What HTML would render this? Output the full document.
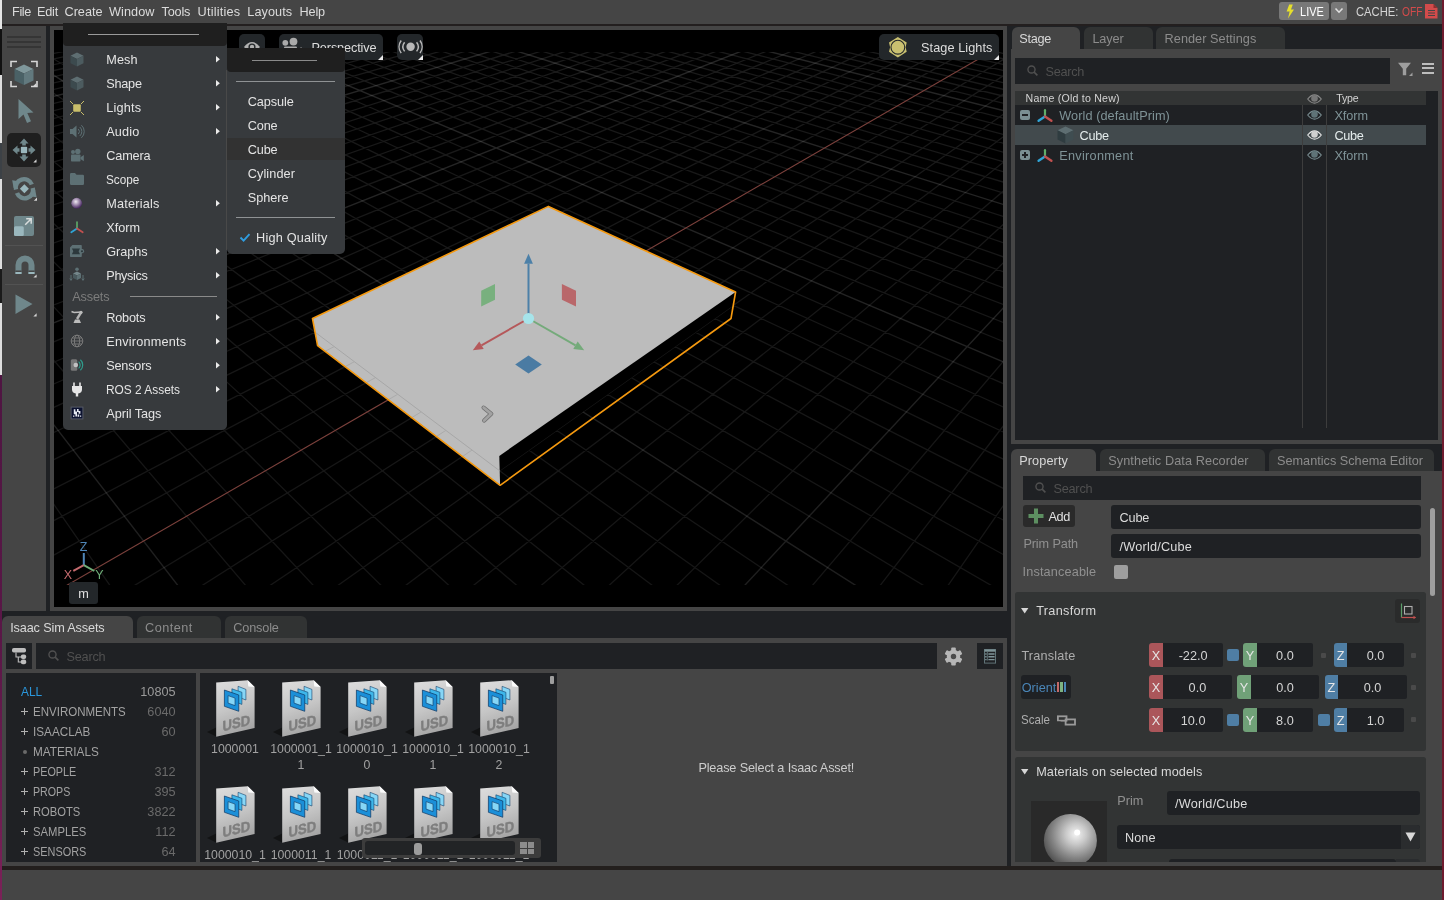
<!DOCTYPE html><html lang="en"><head><meta charset="utf-8"><title>Isaac Sim</title><style>html,body{margin:0;padding:0}body{width:1444px;height:900px;overflow:hidden;position:relative;background:#454545;font-family:"Liberation Sans", sans-serif;font-size:12.7px;color:#ccc}body{will-change:transform}div,span,svg{position:absolute;box-sizing:border-box}svg{overflow:visible}</style></head><body><div style="left:0px;top:0px;width:2px;height:900px;background:linear-gradient(#e6e6e6 0px,#e6e6e6 29px,#111 29px,#111 75px,#dedede 75px,#dedede 143px,#3c4146 143px,#3c4146 179px,#dedede 179px,#dedede 269px,#1a1a1a 269px,#1a1a1a 303px,#dedede 303px,#dedede 375px,#4f1542 375px,#5a1747 640px,#7b2158 900px);"></div><div style="left:1442px;top:0px;width:2px;height:900px;background:#6e1b2e;"></div><div style="left:2px;top:0px;width:1440px;height:24px;background:#454545;"></div><div style="left:2px;top:24px;width:1440px;height:2px;background:#231f1f;"></div><span style="top:3.60px;font-size:12.7px;line-height:16px;color:#dcdcdc;white-space:pre;letter-spacing:-0.363px;left:12px;">File</span><span style="top:3.60px;font-size:12.7px;line-height:16px;color:#dcdcdc;white-space:pre;letter-spacing:-0.219px;left:37px;">Edit</span><span style="top:3.60px;font-size:12.7px;line-height:16px;color:#dcdcdc;white-space:pre;letter-spacing:-0.016px;left:64.5px;">Create</span><span style="top:3.60px;font-size:12.7px;line-height:16px;color:#dcdcdc;white-space:pre;letter-spacing:0.062px;left:109px;">Window</span><span style="top:3.60px;font-size:12.7px;line-height:16px;color:#dcdcdc;white-space:pre;letter-spacing:-0.165px;left:161.5px;">Tools</span><span style="top:3.60px;font-size:12.7px;line-height:16px;color:#dcdcdc;white-space:pre;letter-spacing:0.223px;left:197.5px;">Utilities</span><span style="top:3.60px;font-size:12.7px;line-height:16px;color:#dcdcdc;white-space:pre;letter-spacing:0.066px;left:247.3px;">Layouts</span><span style="top:3.60px;font-size:12.7px;line-height:16px;color:#dcdcdc;white-space:pre;letter-spacing:-0.148px;left:299.5px;">Help</span><div style="left:1279px;top:2px;width:50px;height:18px;background:#787878;border-radius:3px;"></div><svg style="left:1285px;top:4px;" width="10" height="15" viewBox="0 0 10 15"><path d="M4.2 0.5L7.8 0.5L6 5.4L9 5.4L3 14.5L4.6 7.6L1.6 7.6Z" fill="#e6df2c"/></svg><span style="top:3.60px;font-size:12.7px;line-height:16px;color:#ffffff;white-space:pre;transform:scaleX(0.8686);transform-origin:0 50%;left:1299.5px;">LIVE</span><div style="left:1331px;top:2px;width:16px;height:18px;background:#787878;border-radius:3px;"></div><svg style="left:1334px;top:7px;" width="10" height="8" viewBox="0 0 10 8"><path d="M1.5 1.5L5 5.2L8.5 1.5" fill="none" stroke="#e0e0e0" stroke-width="1.6"/></svg><span style="top:3.60px;font-size:12.7px;line-height:16px;color:#d4d4d4;white-space:pre;transform:scaleX(0.8845);transform-origin:0 50%;left:1355.6px;">CACHE:</span><span style="top:3.60px;font-size:12.7px;line-height:16px;color:#d24b4b;white-space:pre;transform:scaleX(0.8079);transform-origin:0 50%;left:1401.5px;">OFF</span><svg style="left:1425px;top:4px;" width="13" height="15" viewBox="0 0 13 15"><path d="M0 0H8.5L12.5 4V14.5H0Z" fill="#d24b4b"/><path d="M8.5 0V4H12.5Z" fill="#8a2f2f"/><path d="M3 6.5H10M3 9H10M3 11.5H10" stroke="#454545" stroke-width="1.2"/></svg><div style="left:2px;top:26px;width:44px;height:585px;background:#454545;"></div><div style="left:7px;top:35.5px;width:34px;height:2.6px;background:#353535;"></div><div style="left:7px;top:40.5px;width:34px;height:2.6px;background:#353535;"></div><div style="left:7px;top:45.5px;width:34px;height:2.6px;background:#353535;"></div><svg style="left:8px;top:58px;" width="32" height="32" viewBox="0 0 32 32"><path d="M3 9V3.5H9M23 3.5H29V9M3 23V28.5H9M23 28.5H29V23" fill="none" stroke="#d6d6d6" stroke-width="1.6"/><path d="M16 6.5L25.5 11L16 15.5L6.5 11Z" fill="#7f979b"/><path d="M6.5 11L16 15.5V27L6.5 22.5Z" fill="#4a6166"/><path d="M25.5 11V22.5L16 27V15.5Z" fill="#62797e"/><path d="M28.3 25V28.3H25Z" fill="#d6d6d6"/></svg><svg style="left:16px;top:98px;" width="20" height="28" viewBox="0 0 20 28"><path d="M2.5 1L2.5 21L7.5 16.5L11 25L15 23.2L11.3 15L17.5 14.5Z" fill="#6f878b"/></svg><div style="left:7px;top:133px;width:34px;height:34px;background:#1f1f1f;border-radius:5px;"></div><svg style="left:9px;top:135px;" width="30" height="30" viewBox="0 0 30 30"><path d="M15 3.5L19.5 8.5H10.5Z M15 26.5L10.5 21.5H19.5Z M3.5 15L8.5 10.5V19.5Z M26.5 15L21.5 19.5V10.5Z" fill="#6f878b"/><path d="M13.2 8H16.8V10.5H13.2Z M13.2 19.5H16.8V22H13.2Z M8 13.2H10.5V16.8H8Z M19.5 13.2H22V16.8H19.5Z" fill="#6f878b"/><rect x="11.8" y="11.8" width="6.4" height="6.4" rx="1" fill="#9ab7bd"/><path d="M27.5 24.3V27.5H24.3Z" fill="#d6d6d6"/></svg><svg style="left:11px;top:175px;" width="28" height="28" viewBox="0 0 28 28"><path d="M5 14.5A8.3 8.3 0 0 1 20.8 9.5" fill="none" stroke="#6f878b" stroke-width="4.4"/><path d="M1.2 5.2L9.6 6.4L2.6 13Z" fill="#6f878b"/><path d="M21.8 13A8.3 8.3 0 0 1 6 18" fill="none" stroke="#6f878b" stroke-width="4.4"/><path d="M25.6 22.3L17.2 21.1L24.2 14.5Z" fill="#6f878b"/><path d="M13.4 9.3L17.9 13.8L13.4 18.3L8.9 13.8Z" fill="#9ab7bd"/><path d="M26 22.5V25.7H22.8Z" fill="#d6d6d6"/></svg><svg style="left:13px;top:215px;" width="22" height="22" viewBox="0 0 22 22"><rect x="1" y="1" width="20" height="20" rx="2" fill="#6f878b"/><rect x="1" y="11.2" width="9.8" height="9.8" rx="1.5" fill="#9ab7bd"/><path d="M12.2 9.8L18 4M13.2 3.8H18.2V8.8" fill="none" stroke="#d8dcdc" stroke-width="1.5"/></svg><div style="left:5px;top:245px;width:38px;height:1px;background:#525252;"></div><svg style="left:12px;top:253px;" width="26" height="26" viewBox="0 0 26 26"><path d="M3.5 21V12A9.5 9.5 0 0 1 22.5 12V21H16.5V12A3.5 3.5 0 0 0 9.5 12V21Z" fill="#6f878b"/><path d="M3.5 17.5H9.5V19H3.5Z M16.5 17.5H22.5V19H16.5Z" fill="#454545"/><path d="M3.5 19H9.5V21H3.5Z M16.5 19H22.5V21H16.5Z" fill="#9ab7bd"/><path d="M24.6 21.4V24.6H21.4Z" fill="#d6d6d6"/></svg><div style="left:5px;top:284px;width:38px;height:1px;background:#525252;"></div><svg style="left:14px;top:293px;" width="24" height="26" viewBox="0 0 24 26"><path d="M1.5 1.5L18.5 11L1.5 21Z" fill="#6f878b"/><path d="M22.6 20.3V23.5H19.4Z" fill="#d6d6d6"/></svg><div style="left:46px;top:26px;width:4px;height:585px;background:#1f2124;"></div><div style="left:50px;top:26px;width:957px;height:585px;background:#454545;"></div><div style="left:54px;top:30px;width:949px;height:577px;background:#000;"></div><div style="left:1007px;top:26px;width:4px;height:840px;background:#1f2124;"></div><svg style="left:54px;top:30px;" width="949" height="577" viewBox="0 0 949 577"><defs><clipPath id="rc"><rect x="0" y="22" width="949" height="533"/></clipPath><linearGradient id="gf" gradientUnits="userSpaceOnUse" x1="0" y1="22" x2="0" y2="555"><stop offset="0" stop-color="#fff" stop-opacity=".105"/><stop offset=".25" stop-color="#fff" stop-opacity=".095"/><stop offset="1" stop-color="#fff" stop-opacity=".085"/></linearGradient><linearGradient id="gm" gradientUnits="userSpaceOnUse" x1="0" y1="22" x2="0" y2="555"><stop offset="0" stop-color="#fff" stop-opacity=".15"/><stop offset="1" stop-color="#fff" stop-opacity=".12"/></linearGradient></defs><g clip-path="url(#rc)"><path d="M475.0 -94.6L1371.4 81.5M467.0 -93.0L1369.8 87.1M459.0 -91.4L1368.1 92.9M450.7 -89.8L1366.3 98.9M433.9 -86.5L1362.7 111.5M425.3 -84.8L1360.7 118.0M416.5 -83.1L1358.8 124.8M407.6 -81.3L1356.7 131.9M398.5 -79.5L1354.6 139.1M389.3 -77.7L1352.4 146.7M379.9 -75.9L1350.1 154.5M370.4 -74.0L1347.8 162.5M360.6 -72.1L1345.3 170.9M340.7 -68.2L1340.1 188.6M330.5 -66.2L1337.4 198.0M320.0 -64.1L1334.6 207.7M309.4 -62.0L1331.6 217.8M298.6 -59.9L1328.5 228.4M287.6 -57.8L1325.3 239.4M276.4 -55.6L1321.9 250.9M264.9 -53.3L1318.4 262.9M253.3 -51.0L1314.8 275.4M229.3 -46.3L1307.0 302.2M216.9 -43.9L1302.8 316.6M204.3 -41.4L1298.3 331.7M191.5 -38.9L1293.7 347.6M178.4 -36.3L1288.8 364.3M165.0 -33.7L1283.7 381.9M151.3 -31.0L1278.3 400.4M137.4 -28.3L1272.5 420.1M123.1 -25.5L1266.5 440.8M93.7 -19.7L1253.2 486.2M78.5 -16.7L1246.0 511.1M63.0 -13.7L1238.2 537.6M47.1 -10.5L1230.0 565.9M30.9 -7.3L1221.1 596.2M14.3 -4.1L1211.6 628.7M-2.7 -0.8L1201.4 663.7M-20.1 2.7L1190.3 701.5M-37.9 6.2L1178.4 742.4M-74.8 13.4L1151.3 835.2M-93.9 17.2L1135.9 888.1M-113.5 21.0L1118.9 946.2M-133.6 25.0L1100.1 1010.4M-154.2 29.0L1079.4 1081.5M-175.4 33.2L1056.2 1160.9M-197.1 37.4L1030.1 1250.0M-219.4 41.8L1000.7 1350.8M-242.2 46.3L967.2 1465.7M-289.9 55.7L883.7 1751.5M-314.7 60.5L830.9 1932.3M-340.3 65.5L767.8 2148.2M-366.5 70.7L691.2 2410.6M-393.6 76.0L596.1 2736.1M-421.4 81.5L475.0 3150.9M475.0 -94.6L-450.1 87.1M483.0 -93.0L-448.9 92.9M499.3 -89.8L-446.3 105.1M507.6 -88.2L-444.9 111.5M516.1 -86.5L-443.6 118.0M524.7 -84.8L-442.1 124.8M533.5 -83.1L-440.6 131.9M542.4 -81.3L-439.1 139.1M551.5 -79.5L-437.5 146.7M560.7 -77.7L-435.8 154.5M570.1 -75.9L-434.1 162.5M589.4 -72.1L-430.5 179.6M599.2 -70.2L-428.6 188.6M609.3 -68.2L-426.6 198.0M619.5 -66.2L-424.5 207.7M630.0 -64.1L-422.4 217.8M640.6 -62.0L-420.1 228.4M651.4 -59.9L-417.8 239.4M662.4 -57.8L-415.4 250.9M673.6 -55.6L-412.8 262.9M696.7 -51.0L-407.4 288.5M708.6 -48.7L-404.5 302.2M720.7 -46.3L-401.4 316.6M733.1 -43.9L-398.2 331.7M745.7 -41.4L-394.9 347.6M758.5 -38.9L-391.3 364.3M771.6 -36.3L-387.6 381.9M785.0 -33.7L-383.7 400.4M798.7 -31.0L-379.5 420.1M826.9 -25.5L-370.4 462.8M841.4 -22.6L-365.5 486.2M856.3 -19.7L-360.2 511.1M871.5 -16.7L-354.6 537.6M887.0 -13.7L-348.6 565.9M902.9 -10.5L-342.2 596.2M919.1 -7.3L-335.3 628.7M935.7 -4.1L-327.8 663.7M952.7 -0.8L-319.8 701.5M987.9 6.2L-301.7 786.8M1006.1 9.7L-291.5 835.2M1024.8 13.4L-280.3 888.1M1043.9 17.2L-267.9 946.2M1063.5 21.0L-254.3 1010.4M1083.6 25.0L-239.2 1081.5M1104.2 29.0L-222.4 1160.9M1125.4 33.2L-203.5 1250.0M1147.1 37.4L-182.1 1350.8M1192.2 46.3L-129.8 1597.8M1215.7 50.9L-97.2 1751.5M1239.9 55.7L-58.8 1932.3M1264.7 60.5L-13.0 2148.2M1290.3 65.5L42.6 2410.6M1316.5 70.7L111.6 2736.1M1343.6 76.0L199.6 3150.9M1371.4 81.5L315.4 3697.3" stroke="url(#gf)" stroke-width="1.25" fill="none"/><path d="M442.4 -88.2L1364.5 105.1M350.8 -70.2L1342.8 179.6M241.4 -48.7L1311.0 288.5M108.6 -22.6L1260.0 462.8M-56.1 9.7L1165.4 786.8M-265.7 50.9L928.6 1597.8M491.0 -91.4L-447.6 98.9M579.6 -74.0L-432.3 170.9M685.1 -53.3L-410.2 275.4M812.6 -28.3L-375.1 440.8M1169.4 41.8L-157.8 1465.7" stroke="url(#gm)" stroke-width="1.4" fill="none"/><path d="M970.1 2.7L-311.2 742.4" stroke="#7c413c" stroke-width="1.1" fill="none"/><polygon points="494.4,176.4 681.6,262.0 677.0,288.5 446.1,455.3 263.6,315.6 258.5,288.5" fill="#bcbcbc"/><polygon points="445.3,425.9 681.6,262.0 677.0,288.5 446.1,455.3" fill="#000"/><clipPath id="bf"><polygon points="445.7,440.8 679.3,275.4 677.0,288.5 446.1,455.3"/></clipPath><g clip-path="url(#bf)"><path d="M475.0 -94.6L1371.4 81.5M467.0 -93.0L1369.8 87.1M459.0 -91.4L1368.1 92.9M450.7 -89.8L1366.3 98.9M433.9 -86.5L1362.7 111.5M425.3 -84.8L1360.7 118.0M416.5 -83.1L1358.8 124.8M407.6 -81.3L1356.7 131.9M398.5 -79.5L1354.6 139.1M389.3 -77.7L1352.4 146.7M379.9 -75.9L1350.1 154.5M370.4 -74.0L1347.8 162.5M360.6 -72.1L1345.3 170.9M340.7 -68.2L1340.1 188.6M330.5 -66.2L1337.4 198.0M320.0 -64.1L1334.6 207.7M309.4 -62.0L1331.6 217.8M298.6 -59.9L1328.5 228.4M287.6 -57.8L1325.3 239.4M276.4 -55.6L1321.9 250.9M264.9 -53.3L1318.4 262.9M253.3 -51.0L1314.8 275.4M229.3 -46.3L1307.0 302.2M216.9 -43.9L1302.8 316.6M204.3 -41.4L1298.3 331.7M191.5 -38.9L1293.7 347.6M178.4 -36.3L1288.8 364.3M165.0 -33.7L1283.7 381.9M151.3 -31.0L1278.3 400.4M137.4 -28.3L1272.5 420.1M123.1 -25.5L1266.5 440.8M93.7 -19.7L1253.2 486.2M78.5 -16.7L1246.0 511.1M63.0 -13.7L1238.2 537.6M47.1 -10.5L1230.0 565.9M30.9 -7.3L1221.1 596.2M14.3 -4.1L1211.6 628.7M-2.7 -0.8L1201.4 663.7M-20.1 2.7L1190.3 701.5M-37.9 6.2L1178.4 742.4M-74.8 13.4L1151.3 835.2M-93.9 17.2L1135.9 888.1M-113.5 21.0L1118.9 946.2M-133.6 25.0L1100.1 1010.4M-154.2 29.0L1079.4 1081.5M-175.4 33.2L1056.2 1160.9M-197.1 37.4L1030.1 1250.0M-219.4 41.8L1000.7 1350.8M-242.2 46.3L967.2 1465.7M-289.9 55.7L883.7 1751.5M-314.7 60.5L830.9 1932.3M-340.3 65.5L767.8 2148.2M-366.5 70.7L691.2 2410.6M-393.6 76.0L596.1 2736.1M-421.4 81.5L475.0 3150.9M475.0 -94.6L-450.1 87.1M483.0 -93.0L-448.9 92.9M499.3 -89.8L-446.3 105.1M507.6 -88.2L-444.9 111.5M516.1 -86.5L-443.6 118.0M524.7 -84.8L-442.1 124.8M533.5 -83.1L-440.6 131.9M542.4 -81.3L-439.1 139.1M551.5 -79.5L-437.5 146.7M560.7 -77.7L-435.8 154.5M570.1 -75.9L-434.1 162.5M589.4 -72.1L-430.5 179.6M599.2 -70.2L-428.6 188.6M609.3 -68.2L-426.6 198.0M619.5 -66.2L-424.5 207.7M630.0 -64.1L-422.4 217.8M640.6 -62.0L-420.1 228.4M651.4 -59.9L-417.8 239.4M662.4 -57.8L-415.4 250.9M673.6 -55.6L-412.8 262.9M696.7 -51.0L-407.4 288.5M708.6 -48.7L-404.5 302.2M720.7 -46.3L-401.4 316.6M733.1 -43.9L-398.2 331.7M745.7 -41.4L-394.9 347.6M758.5 -38.9L-391.3 364.3M771.6 -36.3L-387.6 381.9M785.0 -33.7L-383.7 400.4M798.7 -31.0L-379.5 420.1M826.9 -25.5L-370.4 462.8M841.4 -22.6L-365.5 486.2M856.3 -19.7L-360.2 511.1M871.5 -16.7L-354.6 537.6M887.0 -13.7L-348.6 565.9M902.9 -10.5L-342.2 596.2M919.1 -7.3L-335.3 628.7M935.7 -4.1L-327.8 663.7M952.7 -0.8L-319.8 701.5M987.9 6.2L-301.7 786.8M1006.1 9.7L-291.5 835.2M1024.8 13.4L-280.3 888.1M1043.9 17.2L-267.9 946.2M1063.5 21.0L-254.3 1010.4M1083.6 25.0L-239.2 1081.5M1104.2 29.0L-222.4 1160.9M1125.4 33.2L-203.5 1250.0M1147.1 37.4L-182.1 1350.8M1192.2 46.3L-129.8 1597.8M1215.7 50.9L-97.2 1751.5M1239.9 55.7L-58.8 1932.3M1264.7 60.5L-13.0 2148.2M1290.3 65.5L42.6 2410.6M1316.5 70.7L111.6 2736.1M1343.6 76.0L199.6 3150.9M1371.4 81.5L315.4 3697.3" stroke="url(#gf)" stroke-width="1.25" fill="none"/><path d="M442.4 -88.2L1364.5 105.1M350.8 -70.2L1342.8 179.6M241.4 -48.7L1311.0 288.5M108.6 -22.6L1260.0 462.8M-56.1 9.7L1165.4 786.8M-265.7 50.9L928.6 1597.8M491.0 -91.4L-447.6 98.9M579.6 -74.0L-432.3 170.9M685.1 -53.3L-410.2 275.4M812.6 -28.3L-375.1 440.8M1169.4 41.8L-157.8 1465.7" stroke="url(#gm)" stroke-width="1.4" fill="none"/></g><clipPath id="lf"><polygon points="261.1,302.2 445.7,440.8 446.1,455.3 263.6,315.6"/></clipPath><path d="M261.1 302.2L445.7 440.8" stroke="#a4a4a4" stroke-width=".9" fill="none"/><path clip-path="url(#lf)" d="M280.2 316.6L235.0 339.5M300.4 331.7L254.7 355.8M321.5 347.6L275.5 373.0M343.7 364.3L297.4 391.0M367.2 381.9L320.5 410.1M391.9 400.4L345.0 430.3M418.0 420.1L370.9 451.7" stroke="#a8a8a8" stroke-width=".9" fill="none"/><polygon points="494.4,176.4 681.6,262.0 677.0,288.5 446.1,455.3 263.6,315.6 258.5,288.5" fill="none" stroke="#f5990f" stroke-width="1.6" stroke-linejoin="round"/></g><line x1="474.5" y1="288.5" x2="474.5" y2="233.7" stroke="#4c80a8" stroke-width="2"/><polygon points="474.5,223.7 478.9,233.7 470.1,233.7" fill="#4c80a8"/><line x1="474.5" y1="288.5" x2="427.5" y2="315.3" stroke="#b5585a" stroke-width="2"/><polygon points="418.8,320.2 425.3,311.4 429.7,319.1" fill="#b5585a"/><line x1="474.5" y1="288.5" x2="521.5" y2="315.3" stroke="#74aa7a" stroke-width="2"/><polygon points="530.2,320.2 519.3,319.1 523.7,311.4" fill="#74aa7a"/><polygon points="427.2,260.7 441.0,253.9 441.0,269.7 427.2,276.5" fill="#78b07e"/><polygon points="507.9,253.9 522.0,260.7 522.0,276.5 507.9,269.7" fill="#b9676a"/><polygon points="474.5,325.6 487.8,334.5 474.5,343.4 461.2,334.5" fill="#4a7ba3"/><circle cx="474.5" cy="288.5" r="5.6" fill="#a6e4ea"/><path d="M429.6 377.6L437.3 383.8L430.2 390.6" fill="none" stroke="#6c6c6c" stroke-width="4.2" stroke-linejoin="round" stroke-linecap="round"/><path d="M429.6 377.6L437.3 383.8L430.2 390.6" fill="none" stroke="#a2a2a2" stroke-width="2.8" stroke-linejoin="round" stroke-linecap="round"/></svg><div style="left:239px;top:34px;width:26px;height:26px;background:#23272a;border-radius:5px;"></div><svg style="left:243px;top:39px;" width="18" height="16" viewBox="0 0 18 16"><path d="M1 8Q9 -2 17 8Q9 18 1 8Z" fill="#b0b0b0"/><circle cx="9" cy="8" r="3.6" fill="#23272a"/><circle cx="9" cy="8" r="2.2" fill="#b0b0b0"/></svg><div style="left:279px;top:34px;width:104px;height:26px;background:#23272a;border-radius:5px;"></div><svg style="left:281px;top:37px;" width="22" height="20" viewBox="0 0 22 20"><circle cx="4.3" cy="5.8" r="2.9" fill="#aaa"/><circle cx="12.5" cy="4.6" r="3.9" fill="#aaa"/><rect x="3" y="9.5" width="13" height="9" rx="1" fill="#aaa"/><path d="M16 13L20.5 10V18L16 15.5Z" fill="#aaa"/></svg><span style="top:39.60px;font-size:12.7px;line-height:16px;color:#dddddd;white-space:pre;letter-spacing:-0.118px;left:311.5px;">Perspective</span><svg style="left:378px;top:55px;" width="5" height="5" viewBox="0 0 5 5"><path d="M5 0V5H0Z" fill="#e8e8e8"/></svg><div style="left:397px;top:34px;width:26px;height:26px;background:#23272a;border-radius:5px;"></div><svg style="left:398px;top:38px;" width="25" height="18" viewBox="0 0 25 18"><circle cx="12.6" cy="8.8" r="4.2" fill="#b8b8b8"/><path d="M6.6 4.2A7.5 7.5 0 0 0 6.6 13.4M18.6 4.2A7.5 7.5 0 0 1 18.6 13.4" fill="none" stroke="#b8b8b8" stroke-width="1.5"/><path d="M3.2 2.5A10.5 10.5 0 0 0 3.2 15.1M22 2.5A10.5 10.5 0 0 1 22 15.1" fill="none" stroke="#b8b8b8" stroke-width="1.5"/></svg><svg style="left:418px;top:55px;" width="5" height="5" viewBox="0 0 5 5"><path d="M5 0V5H0Z" fill="#e8e8e8"/></svg><div style="left:879px;top:34px;width:120px;height:26px;background:#23272a;border-radius:5px;"></div><svg style="left:888.7px;top:36.7px;" width="18" height="21" viewBox="0 0 18 21"><path d="M8.85 0L17.7 5.6L16.6 10.2L17.7 14.8L8.85 20.4L0 14.8L1.1 10.2L0 5.6Z" fill="#c9c070"/><circle cx="8.85" cy="10.2" r="6.9" fill="#c9c070" stroke="#23272a" stroke-width="1.1"/></svg><span style="top:39.60px;font-size:12.7px;line-height:16px;color:#dddddd;white-space:pre;letter-spacing:0.079px;left:921px;">Stage Lights</span><svg style="left:994px;top:55px;" width="5" height="5" viewBox="0 0 5 5"><path d="M5 0V5H0Z" fill="#e8e8e8"/></svg><svg style="left:60px;top:538px;" width="50" height="46" viewBox="0 0 50 46"><path d="M23.8 27.1V15" stroke="#4f86b8" stroke-width="2"/><path d="M23.8 27.1L13.3 32.9" stroke="#c46a6e" stroke-width="2"/><path d="M23.8 27.1L34.3 33" stroke="#6fae78" stroke-width="2"/></svg><span style="top:538.67px;font-size:12.5px;line-height:16px;color:#4f86b8;white-space:pre;left:83.6px;transform:translateX(-50%);">Z</span><span style="top:566.67px;font-size:12.5px;line-height:16px;color:#c46a6e;white-space:pre;left:67.8px;transform:translateX(-50%);">X</span><span style="top:566.67px;font-size:12.5px;line-height:16px;color:#6fae78;white-space:pre;left:99.4px;transform:translateX(-50%);">Y</span><div style="left:69px;top:582px;width:29px;height:22px;background:#23272a;border-radius:3px;"></div><span style="top:585.60px;font-size:12.7px;line-height:16px;color:#e0e0e0;white-space:pre;left:83.5px;transform:translateX(-50%);">m</span><div style="left:1011px;top:26px;width:431px;height:23px;background:#1f2124;"></div><div style="left:1011px;top:49px;width:431px;height:395px;background:#454545;"></div><div style="left:1011.5px;top:27px;width:68.5px;height:22px;background:#454545;border-radius:6px 6px 0 0;"></div><span style="top:31.20px;font-size:12.7px;line-height:16px;color:#d8d8d8;white-space:pre;letter-spacing:-0.231px;left:1019.2px;">Stage</span><div style="left:1084px;top:27px;width:68.5px;height:22px;background:#313333;border-radius:6px 6px 0 0;"></div><span style="top:31.20px;font-size:12.7px;line-height:16px;color:#8c8c8c;white-space:pre;letter-spacing:-0.090px;left:1092.4px;">Layer</span><div style="left:1155.7px;top:27px;width:129.3px;height:22px;background:#313333;border-radius:6px 6px 0 0;"></div><span style="top:31.20px;font-size:12.7px;line-height:16px;color:#8c8c8c;white-space:pre;letter-spacing:0.048px;left:1164.6px;">Render Settings</span><div style="left:1015px;top:58px;width:375px;height:26px;background:#1f2124;"></div><svg style="left:1027px;top:65.2px;" width="12" height="12" viewBox="0 0 12 12"><circle cx="4.5" cy="4.5" r="3.55" fill="none" stroke="#505050" stroke-width="1.4"/><path d="M7.1 7.1L10.4 10.4" stroke="#505050" stroke-width="1.6"/></svg><span style="top:63.80px;font-size:12.7px;line-height:16px;color:#505050;white-space:pre;letter-spacing:-0.301px;left:1045.6px;">Search</span><svg style="left:1397px;top:62px;" width="16" height="15" viewBox="0 0 16 15"><path d="M1 0.8H14L9.2 6.8V13.2H5.8V6.8Z" fill="#9e9e9e"/><path d="M15.5 10.5V14H12Z" fill="#9e9e9e"/></svg><div style="left:1421.7px;top:62.5px;width:12.5px;height:2px;background:#bdbdbd;"></div><div style="left:1421.7px;top:67px;width:12.5px;height:2px;background:#bdbdbd;"></div><div style="left:1421.7px;top:71.5px;width:12.5px;height:2px;background:#bdbdbd;"></div><div style="left:1015px;top:91px;width:423px;height:349px;background:#1f2124;"></div><div style="left:1015px;top:91px;width:411px;height:14px;background:#323434;"></div><span style="top:89.93px;font-size:10.6px;line-height:16px;color:#d4d4d4;white-space:pre;letter-spacing:0.208px;left:1025.6px;">Name (Old to New)</span><svg style="left:1306.8px;top:93.5px;" width="15" height="10" viewBox="0 0 15 10"><path d="M0.7 5Q7.5 -3.2 14.3 5Q7.5 13.2 0.7 5Z" fill="none" stroke="#8a8a8a" stroke-width="1.1"/><circle cx="7.5" cy="4.4" r="3.3" fill="#777"/></svg><span style="top:89.93px;font-size:10.6px;line-height:16px;color:#d4d4d4;white-space:pre;letter-spacing:-0.217px;left:1336.3px;">Type</span><div style="left:1015px;top:125px;width:411px;height:20px;background:#424a4d;"></div><div style="left:1302px;top:105px;width:1px;height:323px;background:#3d3d3d;"></div><div style="left:1326px;top:105px;width:1px;height:323px;background:#3d3d3d;"></div><div style="left:1020px;top:110px;width:10px;height:10px;background:#7a8e92;border-radius:2px;"></div><div style="left:1022px;top:114.2px;width:6px;height:1.8px;background:#1f2124;"></div><svg style="left:1037px;top:109px;" width="16" height="14" viewBox="0 0 16 14"><path d="M8 7.5V1.2" stroke="#5fae6a" stroke-width="2.2" stroke-linecap="round"/><path d="M8 7.5L1.6 11.8" stroke="#2fa4d6" stroke-width="2.4" stroke-linecap="round"/><path d="M8 7.5L14.4 11.8" stroke="#c0504f" stroke-width="2.4" stroke-linecap="round"/></svg><span style="top:107.90px;font-size:12.7px;line-height:16px;color:#7f9397;white-space:pre;letter-spacing:0.087px;left:1059.2px;">World (defaultPrim)</span><svg style="left:1306.8px;top:110px;" width="15" height="10" viewBox="0 0 15 10"><path d="M0.7 5Q7.5 -3.2 14.3 5Q7.5 13.2 0.7 5Z" fill="none" stroke="#7a8e92" stroke-width="1.1"/><circle cx="7.5" cy="4.4" r="3.3" fill="#5f7377"/></svg><span style="top:107.90px;font-size:12.7px;line-height:16px;color:#7f9397;white-space:pre;letter-spacing:-0.029px;left:1334.4px;">Xform</span><svg style="left:1056.5px;top:126px;" width="17" height="18" viewBox="0 0 17 18"><path d="M8.5 0.5L16.5 4.3L8.5 8.3L0.5 4.3Z" fill="#5e6e72"/><path d="M0.5 4.3L8.5 8.3V17.5L0.5 13.5Z" fill="#2f3c40"/><path d="M16.5 4.3V13.5L8.5 17.5V8.3Z" fill="#3f4d51"/></svg><span style="top:127.60px;font-size:12.7px;line-height:16px;color:#e4ecec;white-space:pre;letter-spacing:-0.286px;left:1079.5px;">Cube</span><svg style="left:1306.8px;top:130px;" width="15" height="10" viewBox="0 0 15 10"><path d="M0.7 5Q7.5 -3.2 14.3 5Q7.5 13.2 0.7 5Z" fill="none" stroke="#e8e8e8" stroke-width="1.1"/><circle cx="7.5" cy="4.4" r="3.3" fill="#d0d0d0"/></svg><span style="top:127.60px;font-size:12.7px;line-height:16px;color:#e4ecec;white-space:pre;letter-spacing:-0.286px;left:1334.4px;">Cube</span><div style="left:1020px;top:150px;width:10px;height:10px;background:#7a8e92;border-radius:2px;"></div><div style="left:1022px;top:154.2px;width:6px;height:1.8px;background:#1f2124;"></div><div style="left:1024.1px;top:152px;width:1.8px;height:6px;background:#1f2124;"></div><svg style="left:1037px;top:149px;" width="16" height="14" viewBox="0 0 16 14"><path d="M8 7.5V1.2" stroke="#5fae6a" stroke-width="2.2" stroke-linecap="round"/><path d="M8 7.5L1.6 11.8" stroke="#2fa4d6" stroke-width="2.4" stroke-linecap="round"/><path d="M8 7.5L14.4 11.8" stroke="#c0504f" stroke-width="2.4" stroke-linecap="round"/></svg><span style="top:148.10px;font-size:12.7px;line-height:16px;color:#7f9397;white-space:pre;letter-spacing:0.288px;left:1059.2px;">Environment</span><svg style="left:1306.8px;top:150px;" width="15" height="10" viewBox="0 0 15 10"><path d="M0.7 5Q7.5 -3.2 14.3 5Q7.5 13.2 0.7 5Z" fill="none" stroke="#7a8e92" stroke-width="1.1"/><circle cx="7.5" cy="4.4" r="3.3" fill="#5f7377"/></svg><span style="top:148.10px;font-size:12.7px;line-height:16px;color:#7f9397;white-space:pre;letter-spacing:-0.029px;left:1334.4px;">Xform</span><div style="left:1011px;top:444px;width:431px;height:27px;background:#1f2124;"></div><div style="left:1011px;top:471px;width:431px;height:395px;background:#454545;"></div><div style="left:1011px;top:449px;width:85px;height:22px;background:#454545;border-radius:6px 6px 0 0;"></div><span style="top:452.60px;font-size:12.7px;line-height:16px;color:#d8d8d8;white-space:pre;letter-spacing:0.106px;left:1019.2px;">Property</span><div style="left:1100px;top:449px;width:165px;height:22px;background:#313333;border-radius:6px 6px 0 0;"></div><span style="top:452.60px;font-size:12.7px;line-height:16px;color:#8c8c8c;white-space:pre;letter-spacing:0.099px;left:1108.2px;">Synthetic Data Recorder</span><div style="left:1269px;top:449px;width:165px;height:22px;background:#313333;border-radius:6px 6px 0 0;"></div><span style="top:452.60px;font-size:12.7px;line-height:16px;color:#8c8c8c;white-space:pre;letter-spacing:0.001px;left:1277px;">Semantics Schema Editor</span><div style="left:0;top:0;width:1444px;height:862px;overflow:hidden;"><div style="left:1023px;top:476px;width:398px;height:24px;background:#1f2124;"></div><svg style="left:1034.5px;top:482.2px;" width="12" height="12" viewBox="0 0 12 12"><circle cx="4.5" cy="4.5" r="3.55" fill="none" stroke="#505050" stroke-width="1.4"/><path d="M7.1 7.1L10.4 10.4" stroke="#505050" stroke-width="1.6"/></svg><span style="top:480.80px;font-size:12.7px;line-height:16px;color:#505050;white-space:pre;letter-spacing:-0.201px;left:1053.4px;">Search</span><div style="left:1023px;top:505.2px;width:52px;height:21.8px;background:#2a2a2a;border-radius:3px;"></div><svg style="left:1028px;top:507.6px;" width="16" height="16" viewBox="0 0 16 16"><path d="M6 0.5H10V6H15.5V10H10V15.5H6V10H0.5V6H6Z" fill="#5d8f61"/></svg><span style="top:509.10px;font-size:12.7px;line-height:16px;color:#e0e0e0;white-space:pre;letter-spacing:-0.326px;left:1048.4px;">Add</span><div style="left:1111.2px;top:505.2px;width:309.8px;height:23.4px;background:#1f2124;border-radius:3px;"></div><span style="top:509.60px;font-size:12.7px;line-height:16px;color:#dcdcdc;white-space:pre;letter-spacing:-0.211px;left:1119.6px;">Cube</span><span style="top:535.60px;font-size:12.7px;line-height:16px;color:#909090;white-space:pre;letter-spacing:-0.123px;left:1023.4px;">Prim Path</span><div style="left:1111.2px;top:534.3px;width:309.8px;height:23.4px;background:#1f2124;border-radius:3px;"></div><span style="top:539.00px;font-size:12.7px;line-height:16px;color:#dcdcdc;white-space:pre;letter-spacing:0.200px;left:1119.6px;">/World/Cube</span><span style="top:563.60px;font-size:12.7px;line-height:16px;color:#909090;white-space:pre;letter-spacing:0.154px;left:1022.5px;">Instanceable</span><div style="left:1114px;top:565px;width:14px;height:14px;background:#9e9e9e;border-radius:2px;"></div><div style="left:1429.6px;top:508px;width:5.4px;height:87.5px;background:#9e9e9e;border-radius:3px;"></div><div style="left:1015px;top:592px;width:411px;height:158.6px;background:#323434;border-radius:2.5px;"></div><svg style="left:1020.8px;top:607.8px;" width="8" height="8" viewBox="0 0 8 8"><path d="M0 0H7.4L3.7 5.6Z" fill="#d6d6d6"/></svg><span style="top:602.60px;font-size:12.7px;line-height:16px;color:#d8d8d8;white-space:pre;letter-spacing:0.306px;left:1036.2px;">Transform</span><div style="left:1395px;top:599px;width:25px;height:24px;background:#2a2b2b;border-radius:3px;"></div><svg style="left:1399px;top:603px;" width="18" height="17" viewBox="0 0 18 17"><path d="M2.5 0.5V14.5" stroke="#5c9e6a" stroke-width="1.2"/><path d="M2.5 14.5H16.5" stroke="#c0504f" stroke-width="1.2"/><path d="M14.5 12.8L17 14.5L14.5 16.2Z" fill="#c0504f"/><rect x="5.5" y="3.5" width="7.5" height="7.5" fill="none" stroke="#b0b0b0" stroke-width="1.1"/></svg><span style="top:647.60px;font-size:12.7px;line-height:16px;color:#adadad;white-space:pre;letter-spacing:0.198px;left:1021.4px;">Translate</span><div style="left:1149px;top:643px;width:14.2px;height:24px;background:#ab565a;border-radius:3px 0 0 3px;"></div><div style="left:1163.2px;top:643px;width:59.8px;height:24px;background:#1f2124;border-radius:0 2px 2px 0;"></div><span style="top:648.00px;font-size:12.7px;line-height:16px;color:#e6e6e6;white-space:pre;left:1156.1px;transform:translateX(-50%);">X</span><span style="top:648.00px;font-size:12.7px;line-height:16px;color:#d4d4d4;white-space:pre;left:1193.1px;transform:translateX(-50%);">-22.0</span><div style="left:1227.3px;top:649px;width:12px;height:12px;background:#4f7ea4;border-radius:2px;"></div><div style="left:1243px;top:643px;width:14.2px;height:24px;background:#70a178;border-radius:3px 0 0 3px;"></div><div style="left:1257.2px;top:643px;width:55.399999999999906px;height:24px;background:#1f2124;border-radius:0 2px 2px 0;"></div><span style="top:648.00px;font-size:12.7px;line-height:16px;color:#e6e6e6;white-space:pre;left:1250.1px;transform:translateX(-50%);">Y</span><span style="top:648.00px;font-size:12.7px;line-height:16px;color:#d4d4d4;white-space:pre;left:1284.9px;transform:translateX(-50%);">0.0</span><div style="left:1321px;top:653px;width:5px;height:5px;background:#4a4a4a;border-radius:1px;"></div><div style="left:1333.7px;top:643px;width:13.7px;height:24px;background:#4f7ea4;border-radius:3px 0 0 3px;"></div><div style="left:1347.4px;top:643px;width:56.399999999999906px;height:24px;background:#1f2124;border-radius:0 2px 2px 0;"></div><span style="top:648.00px;font-size:12.7px;line-height:16px;color:#e6e6e6;white-space:pre;left:1340.55px;transform:translateX(-50%);">Z</span><span style="top:648.00px;font-size:12.7px;line-height:16px;color:#d4d4d4;white-space:pre;left:1375.6px;transform:translateX(-50%);">0.0</span><div style="left:1411.4px;top:653px;width:5px;height:5px;background:#4a4a4a;border-radius:1px;"></div><div style="left:1020.8px;top:675.3px;width:50.2px;height:23.5px;background:#1f2124;border-radius:3px;"></div><span style="top:679.60px;font-size:12.7px;line-height:16px;color:#4a86b8;white-space:pre;letter-spacing:0.023px;left:1021.7px;">Orient</span><div style="left:1056.6px;top:682.3px;width:2.4px;height:9.7px;background:#c26a6a;"></div><div style="left:1060.2px;top:682.3px;width:2.4px;height:9.7px;background:#7db281;"></div><div style="left:1063.8px;top:682.3px;width:2.6px;height:9.7px;background:#4a86b8;"></div><div style="left:1149px;top:675.2px;width:14.2px;height:24px;background:#ab565a;border-radius:3px 0 0 3px;"></div><div style="left:1163.2px;top:675.2px;width:68.3999999999999px;height:24px;background:#1f2124;border-radius:0 2px 2px 0;"></div><span style="top:680.20px;font-size:12.7px;line-height:16px;color:#e6e6e6;white-space:pre;left:1156.1px;transform:translateX(-50%);">X</span><span style="top:680.20px;font-size:12.7px;line-height:16px;color:#d4d4d4;white-space:pre;left:1197.4px;transform:translateX(-50%);">0.0</span><div style="left:1237px;top:675.2px;width:13.8px;height:24px;background:#70a178;border-radius:3px 0 0 3px;"></div><div style="left:1250.8px;top:675.2px;width:68.6000000000001px;height:24px;background:#1f2124;border-radius:0 2px 2px 0;"></div><span style="top:680.20px;font-size:12.7px;line-height:16px;color:#e6e6e6;white-space:pre;left:1243.9px;transform:translateX(-50%);">Y</span><span style="top:680.20px;font-size:12.7px;line-height:16px;color:#d4d4d4;white-space:pre;left:1285.1px;transform:translateX(-50%);">0.0</span><div style="left:1324.5px;top:675.2px;width:13.7px;height:24px;background:#4f7ea4;border-radius:3px 0 0 3px;"></div><div style="left:1338.2px;top:675.2px;width:68.59999999999995px;height:24px;background:#1f2124;border-radius:0 2px 2px 0;"></div><span style="top:680.20px;font-size:12.7px;line-height:16px;color:#e6e6e6;white-space:pre;left:1331.35px;transform:translateX(-50%);">Z</span><span style="top:680.20px;font-size:12.7px;line-height:16px;color:#d4d4d4;white-space:pre;left:1372.5px;transform:translateX(-50%);">0.0</span><div style="left:1411.4px;top:685px;width:5px;height:5px;background:#4a4a4a;border-radius:1px;"></div><span style="top:711.60px;font-size:12.7px;line-height:16px;color:#adadad;white-space:pre;transform:scaleX(0.9102);transform-origin:0 50%;left:1021.4px;">Scale</span><svg style="left:1056px;top:714.6px;" width="21" height="11" viewBox="0 0 21 11"><rect x="1.9" y="1.3" width="8.6" height="4.4" fill="none" stroke="#9a9a9a" stroke-width="1.8"/><rect x="9.6" y="4.4" width="9.4" height="5.2" fill="none" stroke="#9a9a9a" stroke-width="1.8"/><rect x="1" y="6.4" width="3.6" height="1" fill="#323434"/></svg><div style="left:1149px;top:707.5px;width:14.2px;height:24px;background:#ab565a;border-radius:3px 0 0 3px;"></div><div style="left:1163.2px;top:707.5px;width:59.8px;height:24px;background:#1f2124;border-radius:0 2px 2px 0;"></div><span style="top:712.50px;font-size:12.7px;line-height:16px;color:#e6e6e6;white-space:pre;left:1156.1px;transform:translateX(-50%);">X</span><span style="top:712.50px;font-size:12.7px;line-height:16px;color:#d4d4d4;white-space:pre;left:1193.1px;transform:translateX(-50%);">10.0</span><div style="left:1227.3px;top:713.5px;width:12px;height:12px;background:#4f7ea4;border-radius:2px;"></div><div style="left:1243px;top:707.5px;width:14.2px;height:24px;background:#70a178;border-radius:3px 0 0 3px;"></div><div style="left:1257.2px;top:707.5px;width:55.399999999999906px;height:24px;background:#1f2124;border-radius:0 2px 2px 0;"></div><span style="top:712.50px;font-size:12.7px;line-height:16px;color:#e6e6e6;white-space:pre;left:1250.1px;transform:translateX(-50%);">Y</span><span style="top:712.50px;font-size:12.7px;line-height:16px;color:#d4d4d4;white-space:pre;left:1284.9px;transform:translateX(-50%);">8.0</span><div style="left:1317.8px;top:713.5px;width:12px;height:12px;background:#4f7ea4;border-radius:2px;"></div><div style="left:1333.7px;top:707.5px;width:13.7px;height:24px;background:#4f7ea4;border-radius:3px 0 0 3px;"></div><div style="left:1347.4px;top:707.5px;width:56.399999999999906px;height:24px;background:#1f2124;border-radius:0 2px 2px 0;"></div><span style="top:712.50px;font-size:12.7px;line-height:16px;color:#e6e6e6;white-space:pre;left:1340.55px;transform:translateX(-50%);">Z</span><span style="top:712.50px;font-size:12.7px;line-height:16px;color:#d4d4d4;white-space:pre;left:1375.6px;transform:translateX(-50%);">1.0</span><div style="left:1411.4px;top:717px;width:5px;height:5px;background:#4a4a4a;border-radius:1px;"></div><div style="left:1015px;top:757px;width:411px;height:120px;background:#323434;border-radius:2.5px;"></div><svg style="left:1020.8px;top:769.3px;" width="8" height="8" viewBox="0 0 8 8"><path d="M0 0H7.4L3.7 5.6Z" fill="#d6d6d6"/></svg><span style="top:763.80px;font-size:12.7px;line-height:16px;color:#d8d8d8;white-space:pre;letter-spacing:0.067px;left:1036.2px;">Materials on selected models</span><div style="left:1031px;top:801px;width:76px;height:70px;background:#292929;"></div><svg style="left:1043px;top:813px;" width="56" height="56" viewBox="0 0 56 56"><defs><radialGradient id="sg" gradientUnits="userSpaceOnUse" cx="33" cy="21" r="34"><stop offset="0" stop-color="#f4f4f4"/><stop offset=".3" stop-color="#c9c9c9"/><stop offset=".7" stop-color="#858585"/><stop offset="1" stop-color="#565656"/></radialGradient></defs><circle cx="27.4" cy="27.5" r="26.5" fill="url(#sg)"/><circle cx="34.2" cy="19.5" r="3" fill="#fff"/></svg><span style="top:793.10px;font-size:12.7px;line-height:16px;color:#909090;white-space:pre;letter-spacing:-0.045px;left:1117.3px;">Prim</span><div style="left:1167px;top:791px;width:253px;height:23.6px;background:#1f2124;border-radius:3px;"></div><span style="top:796.00px;font-size:12.7px;line-height:16px;color:#dcdcdc;white-space:pre;letter-spacing:0.200px;left:1175px;">/World/Cube</span><div style="left:1117px;top:825px;width:303px;height:23.8px;background:#1f2124;border-radius:3px;"></div><div style="left:1400.7px;top:825px;width:19.3px;height:23.8px;background:#2a2c2e;border-radius:0 3px 3px 0;"></div><svg style="left:1405px;top:832px;" width="11" height="10" viewBox="0 0 11 10"><path d="M0.5 0.5H10.5L5.5 9.5Z" fill="#d8d8d8"/></svg><span style="top:830.20px;font-size:12.7px;line-height:16px;color:#dcdcdc;white-space:pre;letter-spacing:0.039px;left:1125px;">None</span><div style="left:1168.6px;top:859px;width:227.4px;height:10px;background:#1f2124;border-radius:3px;"></div><div style="left:1396px;top:859px;width:24px;height:10px;background:#2a2c2e;border-radius:0 3px 3px 0;"></div></div><div style="left:2px;top:611px;width:1005px;height:27px;background:#1f2124;"></div><div style="left:2px;top:638px;width:1005px;height:228px;background:#454545;"></div><div style="left:2px;top:616px;width:131px;height:22px;background:#454545;border-radius:6px 6px 0 0;"></div><span style="top:619.60px;font-size:12.7px;line-height:16px;color:#d8d8d8;white-space:pre;letter-spacing:-0.144px;left:10.2px;">Isaac Sim Assets</span><div style="left:137px;top:616px;width:84px;height:22px;background:#313333;border-radius:6px 6px 0 0;"></div><span style="top:619.60px;font-size:12.7px;line-height:16px;color:#8c8c8c;white-space:pre;letter-spacing:0.466px;left:145px;">Content</span><div style="left:225px;top:616px;width:82px;height:22px;background:#313333;border-radius:6px 6px 0 0;"></div><span style="top:619.60px;font-size:12.7px;line-height:16px;color:#8c8c8c;white-space:pre;letter-spacing:-0.166px;left:233.3px;">Console</span><div style="left:6px;top:643px;width:26px;height:26px;background:#1f2124;"></div><svg style="left:11px;top:647px;" width="16" height="18" viewBox="0 0 16 18"><rect x="1" y="1" width="14" height="4.6" rx="1.8" fill="#bdbdbd"/><path d="M5 5.6V10H10M7.3 10V15H10" fill="none" stroke="#bdbdbd" stroke-width="1.1"/><rect x="9.8" y="7.4" width="5.4" height="4.6" rx="2" fill="#bdbdbd"/><rect x="9.8" y="12.6" width="5.4" height="4.6" rx="2" fill="#bdbdbd"/></svg><div style="left:36px;top:643px;width:900.5px;height:26px;background:#1f2124;"></div><svg style="left:48px;top:650.2px;" width="12" height="12" viewBox="0 0 12 12"><circle cx="4.5" cy="4.5" r="3.55" fill="none" stroke="#505050" stroke-width="1.4"/><path d="M7.1 7.1L10.4 10.4" stroke="#505050" stroke-width="1.6"/></svg><span style="top:648.80px;font-size:12.7px;line-height:16px;color:#505050;white-space:pre;letter-spacing:-0.217px;left:66.5px;">Search</span><svg style="left:944px;top:646.5px;" width="19" height="19" viewBox="0 0 19 19"><g transform="translate(9.5,9.5)" fill="#b6b6b6"><rect x="-2.3" y="-9" width="4.6" height="5" rx="1" transform="rotate(0)"/><rect x="-2.3" y="-9" width="4.6" height="5" rx="1" transform="rotate(60)"/><rect x="-2.3" y="-9" width="4.6" height="5" rx="1" transform="rotate(120)"/><rect x="-2.3" y="-9" width="4.6" height="5" rx="1" transform="rotate(180)"/><rect x="-2.3" y="-9" width="4.6" height="5" rx="1" transform="rotate(240)"/><rect x="-2.3" y="-9" width="4.6" height="5" rx="1" transform="rotate(300)"/><circle r="6.7"/></g><circle cx="9.5" cy="9.5" r="2.7" fill="#4a4a4a"/></svg><div style="left:976.7px;top:643px;width:26px;height:26px;background:#1f2124;"></div><svg style="left:984px;top:649px;" width="12" height="15" viewBox="0 0 12 15"><rect x="0.5" y="0.5" width="11" height="13.6" fill="none" stroke="#5f7276" stroke-width="1"/><rect x="0.5" y="0.5" width="11" height="2.2" fill="#7f9498"/><path d="M3.4 3V11.6" stroke="#5f7276" stroke-width=".9"/><path d="M1.2 5H2.6M4.4 5H10.6M1.2 7.8H2.6M4.4 7.8H10.6M1.2 10.6H2.6M4.4 10.6H10.6" stroke="#7f9498" stroke-width="1.4"/></svg><div style="left:6px;top:673px;width:190px;height:189px;background:#1f2124;"></div><span style="top:683.60px;font-size:12.7px;line-height:16px;color:#2a97dc;white-space:pre;transform:scaleX(0.9390);transform-origin:0 50%;left:21.2px;">ALL</span><span style="top:683.60px;font-size:12.7px;line-height:16px;color:#9a9a9a;white-space:pre;left:175.6px;transform:translateX(-100%);">10805</span><div style="left:0;top:0;width:1007px;height:862px;overflow:hidden;"><div style="left:21px;top:710.6px;width:7px;height:1.6px;background:#b0b0b0;"></div><div style="left:23.7px;top:707.9px;width:1.6px;height:7px;background:#b0b0b0;"></div><span style="top:703.60px;font-size:12.7px;line-height:16px;color:#a2a2a2;white-space:pre;transform:scaleX(0.9079);transform-origin:0 50%;left:33.4px;">ENVIRONMENTS</span><span style="top:703.60px;font-size:12.7px;line-height:16px;color:#6a6a6a;white-space:pre;left:175.6px;transform:translateX(-100%);">6040</span><div style="left:21px;top:730.6px;width:7px;height:1.6px;background:#b0b0b0;"></div><div style="left:23.7px;top:727.9px;width:1.6px;height:7px;background:#b0b0b0;"></div><span style="top:723.60px;font-size:12.7px;line-height:16px;color:#a2a2a2;white-space:pre;transform:scaleX(0.9233);transform-origin:0 50%;left:33.4px;">ISAACLAB</span><span style="top:723.60px;font-size:12.7px;line-height:16px;color:#6a6a6a;white-space:pre;left:175.6px;transform:translateX(-100%);">60</span><div style="left:23px;top:749.7px;width:4px;height:4px;background:#6a6a6a;border-radius:2px;"></div><span style="top:743.60px;font-size:12.7px;line-height:16px;color:#a2a2a2;white-space:pre;transform:scaleX(0.9284);transform-origin:0 50%;left:33.4px;">MATERIALS</span><div style="left:21px;top:770.6px;width:7px;height:1.6px;background:#b0b0b0;"></div><div style="left:23.7px;top:767.9px;width:1.6px;height:7px;background:#b0b0b0;"></div><span style="top:763.60px;font-size:12.7px;line-height:16px;color:#a2a2a2;white-space:pre;transform:scaleX(0.8527);transform-origin:0 50%;left:33.4px;">PEOPLE</span><span style="top:763.60px;font-size:12.7px;line-height:16px;color:#6a6a6a;white-space:pre;left:175.6px;transform:translateX(-100%);">312</span><div style="left:21px;top:790.6px;width:7px;height:1.6px;background:#b0b0b0;"></div><div style="left:23.7px;top:787.9px;width:1.6px;height:7px;background:#b0b0b0;"></div><span style="top:783.60px;font-size:12.7px;line-height:16px;color:#a2a2a2;white-space:pre;transform:scaleX(0.8397);transform-origin:0 50%;left:33.4px;">PROPS</span><span style="top:783.60px;font-size:12.7px;line-height:16px;color:#6a6a6a;white-space:pre;left:175.6px;transform:translateX(-100%);">395</span><div style="left:21px;top:810.6px;width:7px;height:1.6px;background:#b0b0b0;"></div><div style="left:23.7px;top:807.9px;width:1.6px;height:7px;background:#b0b0b0;"></div><span style="top:803.60px;font-size:12.7px;line-height:16px;color:#a2a2a2;white-space:pre;transform:scaleX(0.8828);transform-origin:0 50%;left:33.4px;">ROBOTS</span><span style="top:803.60px;font-size:12.7px;line-height:16px;color:#6a6a6a;white-space:pre;left:175.6px;transform:translateX(-100%);">3822</span><div style="left:21px;top:830.6px;width:7px;height:1.6px;background:#b0b0b0;"></div><div style="left:23.7px;top:827.9px;width:1.6px;height:7px;background:#b0b0b0;"></div><span style="top:823.60px;font-size:12.7px;line-height:16px;color:#a2a2a2;white-space:pre;transform:scaleX(0.8893);transform-origin:0 50%;left:33.4px;">SAMPLES</span><span style="top:823.60px;font-size:12.7px;line-height:16px;color:#6a6a6a;white-space:pre;left:175.6px;transform:translateX(-100%);">112</span><div style="left:21px;top:850.6px;width:7px;height:1.6px;background:#b0b0b0;"></div><div style="left:23.7px;top:847.9px;width:1.6px;height:7px;background:#b0b0b0;"></div><span style="top:843.60px;font-size:12.7px;line-height:16px;color:#a2a2a2;white-space:pre;transform:scaleX(0.8590);transform-origin:0 50%;left:33.4px;">SENSORS</span><span style="top:843.60px;font-size:12.7px;line-height:16px;color:#6a6a6a;white-space:pre;left:175.6px;transform:translateX(-100%);">64</span><div style="left:200px;top:673px;width:357px;height:189px;background:#1f2124;"></div><div style="left:550px;top:675.6px;width:3.8px;height:8.6px;background:#9e9e9e;border-radius:1px;"></div><svg style="left:207px;top:680px;" width="48" height="58" viewBox="0 0 48 58"><defs><linearGradient id="pg0" x1="0" y1="0" x2="0.25" y2="1"><stop offset="0" stop-color="#dedede"/><stop offset=".55" stop-color="#c6c6c6"/><stop offset="1" stop-color="#a6a6a6"/></linearGradient></defs><path d="M0 52L9.2 47.5V56.6Z" fill="#121314"/><path d="M9.2 2.6L40.8 0.2L47.6 7V48L9.2 56.8Z" fill="url(#pg0)"/><path d="M40.6 0.3L47.6 7L41.3 6.4Z" fill="#fbfbfb"/><path d="M31.1 6.3L38.9 9.4V20L31.1 17Z" fill="#86d6f6" stroke="#14406a" stroke-width=".6"/><path d="M24.9 8.8L34.9 12.3V24.4L24.9 20.6Z" fill="#3db6ea" stroke="#14406a" stroke-width=".6"/><path d="M17.4 10L31.75 15V31.3L17.4 26.3Z" fill="#1b8fd8" stroke="#0f3560" stroke-width=".7"/><path d="M21.1 15.6L28 18.1V25.6L21.1 23.1Z" fill="#86d6f6" stroke="#0f3560" stroke-width=".6"/><g transform="translate(15.6,51.2) skewY(-13)"><text x="0" y="0" style="font:bold 14.5px 'Liberation Sans',sans-serif" fill="#7e7e7e" stroke="#7e7e7e" stroke-width=".45" textLength="27.5" lengthAdjust="spacingAndGlyphs">USD</text></g></svg><span style="top:740.74px;font-size:12.3px;line-height:16px;color:#a2a2a2;white-space:pre;left:235px;transform:translateX(-50%);">1000001</span><svg style="left:273px;top:680px;" width="48" height="58" viewBox="0 0 48 58"><defs><linearGradient id="pg1" x1="0" y1="0" x2="0.25" y2="1"><stop offset="0" stop-color="#dedede"/><stop offset=".55" stop-color="#c6c6c6"/><stop offset="1" stop-color="#a6a6a6"/></linearGradient></defs><path d="M0 52L9.2 47.5V56.6Z" fill="#121314"/><path d="M9.2 2.6L40.8 0.2L47.6 7V48L9.2 56.8Z" fill="url(#pg1)"/><path d="M40.6 0.3L47.6 7L41.3 6.4Z" fill="#fbfbfb"/><path d="M31.1 6.3L38.9 9.4V20L31.1 17Z" fill="#86d6f6" stroke="#14406a" stroke-width=".6"/><path d="M24.9 8.8L34.9 12.3V24.4L24.9 20.6Z" fill="#3db6ea" stroke="#14406a" stroke-width=".6"/><path d="M17.4 10L31.75 15V31.3L17.4 26.3Z" fill="#1b8fd8" stroke="#0f3560" stroke-width=".7"/><path d="M21.1 15.6L28 18.1V25.6L21.1 23.1Z" fill="#86d6f6" stroke="#0f3560" stroke-width=".6"/><g transform="translate(15.6,51.2) skewY(-13)"><text x="0" y="0" style="font:bold 14.5px 'Liberation Sans',sans-serif" fill="#7e7e7e" stroke="#7e7e7e" stroke-width=".45" textLength="27.5" lengthAdjust="spacingAndGlyphs">USD</text></g></svg><span style="top:740.74px;font-size:12.3px;line-height:16px;color:#a2a2a2;white-space:pre;left:301px;transform:translateX(-50%);">1000001_1</span><span style="top:756.74px;font-size:12.3px;line-height:16px;color:#a2a2a2;white-space:pre;left:301px;transform:translateX(-50%);">1</span><svg style="left:339px;top:680px;" width="48" height="58" viewBox="0 0 48 58"><defs><linearGradient id="pg2" x1="0" y1="0" x2="0.25" y2="1"><stop offset="0" stop-color="#dedede"/><stop offset=".55" stop-color="#c6c6c6"/><stop offset="1" stop-color="#a6a6a6"/></linearGradient></defs><path d="M0 52L9.2 47.5V56.6Z" fill="#121314"/><path d="M9.2 2.6L40.8 0.2L47.6 7V48L9.2 56.8Z" fill="url(#pg2)"/><path d="M40.6 0.3L47.6 7L41.3 6.4Z" fill="#fbfbfb"/><path d="M31.1 6.3L38.9 9.4V20L31.1 17Z" fill="#86d6f6" stroke="#14406a" stroke-width=".6"/><path d="M24.9 8.8L34.9 12.3V24.4L24.9 20.6Z" fill="#3db6ea" stroke="#14406a" stroke-width=".6"/><path d="M17.4 10L31.75 15V31.3L17.4 26.3Z" fill="#1b8fd8" stroke="#0f3560" stroke-width=".7"/><path d="M21.1 15.6L28 18.1V25.6L21.1 23.1Z" fill="#86d6f6" stroke="#0f3560" stroke-width=".6"/><g transform="translate(15.6,51.2) skewY(-13)"><text x="0" y="0" style="font:bold 14.5px 'Liberation Sans',sans-serif" fill="#7e7e7e" stroke="#7e7e7e" stroke-width=".45" textLength="27.5" lengthAdjust="spacingAndGlyphs">USD</text></g></svg><span style="top:740.74px;font-size:12.3px;line-height:16px;color:#a2a2a2;white-space:pre;left:367px;transform:translateX(-50%);">1000010_1</span><span style="top:756.74px;font-size:12.3px;line-height:16px;color:#a2a2a2;white-space:pre;left:367px;transform:translateX(-50%);">0</span><svg style="left:405px;top:680px;" width="48" height="58" viewBox="0 0 48 58"><defs><linearGradient id="pg3" x1="0" y1="0" x2="0.25" y2="1"><stop offset="0" stop-color="#dedede"/><stop offset=".55" stop-color="#c6c6c6"/><stop offset="1" stop-color="#a6a6a6"/></linearGradient></defs><path d="M0 52L9.2 47.5V56.6Z" fill="#121314"/><path d="M9.2 2.6L40.8 0.2L47.6 7V48L9.2 56.8Z" fill="url(#pg3)"/><path d="M40.6 0.3L47.6 7L41.3 6.4Z" fill="#fbfbfb"/><path d="M31.1 6.3L38.9 9.4V20L31.1 17Z" fill="#86d6f6" stroke="#14406a" stroke-width=".6"/><path d="M24.9 8.8L34.9 12.3V24.4L24.9 20.6Z" fill="#3db6ea" stroke="#14406a" stroke-width=".6"/><path d="M17.4 10L31.75 15V31.3L17.4 26.3Z" fill="#1b8fd8" stroke="#0f3560" stroke-width=".7"/><path d="M21.1 15.6L28 18.1V25.6L21.1 23.1Z" fill="#86d6f6" stroke="#0f3560" stroke-width=".6"/><g transform="translate(15.6,51.2) skewY(-13)"><text x="0" y="0" style="font:bold 14.5px 'Liberation Sans',sans-serif" fill="#7e7e7e" stroke="#7e7e7e" stroke-width=".45" textLength="27.5" lengthAdjust="spacingAndGlyphs">USD</text></g></svg><span style="top:740.74px;font-size:12.3px;line-height:16px;color:#a2a2a2;white-space:pre;left:433px;transform:translateX(-50%);">1000010_1</span><span style="top:756.74px;font-size:12.3px;line-height:16px;color:#a2a2a2;white-space:pre;left:433px;transform:translateX(-50%);">1</span><svg style="left:471px;top:680px;" width="48" height="58" viewBox="0 0 48 58"><defs><linearGradient id="pg4" x1="0" y1="0" x2="0.25" y2="1"><stop offset="0" stop-color="#dedede"/><stop offset=".55" stop-color="#c6c6c6"/><stop offset="1" stop-color="#a6a6a6"/></linearGradient></defs><path d="M0 52L9.2 47.5V56.6Z" fill="#121314"/><path d="M9.2 2.6L40.8 0.2L47.6 7V48L9.2 56.8Z" fill="url(#pg4)"/><path d="M40.6 0.3L47.6 7L41.3 6.4Z" fill="#fbfbfb"/><path d="M31.1 6.3L38.9 9.4V20L31.1 17Z" fill="#86d6f6" stroke="#14406a" stroke-width=".6"/><path d="M24.9 8.8L34.9 12.3V24.4L24.9 20.6Z" fill="#3db6ea" stroke="#14406a" stroke-width=".6"/><path d="M17.4 10L31.75 15V31.3L17.4 26.3Z" fill="#1b8fd8" stroke="#0f3560" stroke-width=".7"/><path d="M21.1 15.6L28 18.1V25.6L21.1 23.1Z" fill="#86d6f6" stroke="#0f3560" stroke-width=".6"/><g transform="translate(15.6,51.2) skewY(-13)"><text x="0" y="0" style="font:bold 14.5px 'Liberation Sans',sans-serif" fill="#7e7e7e" stroke="#7e7e7e" stroke-width=".45" textLength="27.5" lengthAdjust="spacingAndGlyphs">USD</text></g></svg><span style="top:740.74px;font-size:12.3px;line-height:16px;color:#a2a2a2;white-space:pre;left:499px;transform:translateX(-50%);">1000010_1</span><span style="top:756.74px;font-size:12.3px;line-height:16px;color:#a2a2a2;white-space:pre;left:499px;transform:translateX(-50%);">2</span><svg style="left:207px;top:786px;" width="48" height="58" viewBox="0 0 48 58"><defs><linearGradient id="pg5" x1="0" y1="0" x2="0.25" y2="1"><stop offset="0" stop-color="#dedede"/><stop offset=".55" stop-color="#c6c6c6"/><stop offset="1" stop-color="#a6a6a6"/></linearGradient></defs><path d="M0 52L9.2 47.5V56.6Z" fill="#121314"/><path d="M9.2 2.6L40.8 0.2L47.6 7V48L9.2 56.8Z" fill="url(#pg5)"/><path d="M40.6 0.3L47.6 7L41.3 6.4Z" fill="#fbfbfb"/><path d="M31.1 6.3L38.9 9.4V20L31.1 17Z" fill="#86d6f6" stroke="#14406a" stroke-width=".6"/><path d="M24.9 8.8L34.9 12.3V24.4L24.9 20.6Z" fill="#3db6ea" stroke="#14406a" stroke-width=".6"/><path d="M17.4 10L31.75 15V31.3L17.4 26.3Z" fill="#1b8fd8" stroke="#0f3560" stroke-width=".7"/><path d="M21.1 15.6L28 18.1V25.6L21.1 23.1Z" fill="#86d6f6" stroke="#0f3560" stroke-width=".6"/><g transform="translate(15.6,51.2) skewY(-13)"><text x="0" y="0" style="font:bold 14.5px 'Liberation Sans',sans-serif" fill="#7e7e7e" stroke="#7e7e7e" stroke-width=".45" textLength="27.5" lengthAdjust="spacingAndGlyphs">USD</text></g></svg><span style="top:846.74px;font-size:12.3px;line-height:16px;color:#a2a2a2;white-space:pre;left:235px;transform:translateX(-50%);">1000010_1</span><svg style="left:273px;top:786px;" width="48" height="58" viewBox="0 0 48 58"><defs><linearGradient id="pg6" x1="0" y1="0" x2="0.25" y2="1"><stop offset="0" stop-color="#dedede"/><stop offset=".55" stop-color="#c6c6c6"/><stop offset="1" stop-color="#a6a6a6"/></linearGradient></defs><path d="M0 52L9.2 47.5V56.6Z" fill="#121314"/><path d="M9.2 2.6L40.8 0.2L47.6 7V48L9.2 56.8Z" fill="url(#pg6)"/><path d="M40.6 0.3L47.6 7L41.3 6.4Z" fill="#fbfbfb"/><path d="M31.1 6.3L38.9 9.4V20L31.1 17Z" fill="#86d6f6" stroke="#14406a" stroke-width=".6"/><path d="M24.9 8.8L34.9 12.3V24.4L24.9 20.6Z" fill="#3db6ea" stroke="#14406a" stroke-width=".6"/><path d="M17.4 10L31.75 15V31.3L17.4 26.3Z" fill="#1b8fd8" stroke="#0f3560" stroke-width=".7"/><path d="M21.1 15.6L28 18.1V25.6L21.1 23.1Z" fill="#86d6f6" stroke="#0f3560" stroke-width=".6"/><g transform="translate(15.6,51.2) skewY(-13)"><text x="0" y="0" style="font:bold 14.5px 'Liberation Sans',sans-serif" fill="#7e7e7e" stroke="#7e7e7e" stroke-width=".45" textLength="27.5" lengthAdjust="spacingAndGlyphs">USD</text></g></svg><span style="top:846.74px;font-size:12.3px;line-height:16px;color:#a2a2a2;white-space:pre;left:301px;transform:translateX(-50%);">1000011_1</span><svg style="left:339px;top:786px;" width="48" height="58" viewBox="0 0 48 58"><defs><linearGradient id="pg7" x1="0" y1="0" x2="0.25" y2="1"><stop offset="0" stop-color="#dedede"/><stop offset=".55" stop-color="#c6c6c6"/><stop offset="1" stop-color="#a6a6a6"/></linearGradient></defs><path d="M0 52L9.2 47.5V56.6Z" fill="#121314"/><path d="M9.2 2.6L40.8 0.2L47.6 7V48L9.2 56.8Z" fill="url(#pg7)"/><path d="M40.6 0.3L47.6 7L41.3 6.4Z" fill="#fbfbfb"/><path d="M31.1 6.3L38.9 9.4V20L31.1 17Z" fill="#86d6f6" stroke="#14406a" stroke-width=".6"/><path d="M24.9 8.8L34.9 12.3V24.4L24.9 20.6Z" fill="#3db6ea" stroke="#14406a" stroke-width=".6"/><path d="M17.4 10L31.75 15V31.3L17.4 26.3Z" fill="#1b8fd8" stroke="#0f3560" stroke-width=".7"/><path d="M21.1 15.6L28 18.1V25.6L21.1 23.1Z" fill="#86d6f6" stroke="#0f3560" stroke-width=".6"/><g transform="translate(15.6,51.2) skewY(-13)"><text x="0" y="0" style="font:bold 14.5px 'Liberation Sans',sans-serif" fill="#7e7e7e" stroke="#7e7e7e" stroke-width=".45" textLength="27.5" lengthAdjust="spacingAndGlyphs">USD</text></g></svg><span style="top:846.74px;font-size:12.3px;line-height:16px;color:#a2a2a2;white-space:pre;left:367px;transform:translateX(-50%);">1000011_1</span><svg style="left:405px;top:786px;" width="48" height="58" viewBox="0 0 48 58"><defs><linearGradient id="pg8" x1="0" y1="0" x2="0.25" y2="1"><stop offset="0" stop-color="#dedede"/><stop offset=".55" stop-color="#c6c6c6"/><stop offset="1" stop-color="#a6a6a6"/></linearGradient></defs><path d="M0 52L9.2 47.5V56.6Z" fill="#121314"/><path d="M9.2 2.6L40.8 0.2L47.6 7V48L9.2 56.8Z" fill="url(#pg8)"/><path d="M40.6 0.3L47.6 7L41.3 6.4Z" fill="#fbfbfb"/><path d="M31.1 6.3L38.9 9.4V20L31.1 17Z" fill="#86d6f6" stroke="#14406a" stroke-width=".6"/><path d="M24.9 8.8L34.9 12.3V24.4L24.9 20.6Z" fill="#3db6ea" stroke="#14406a" stroke-width=".6"/><path d="M17.4 10L31.75 15V31.3L17.4 26.3Z" fill="#1b8fd8" stroke="#0f3560" stroke-width=".7"/><path d="M21.1 15.6L28 18.1V25.6L21.1 23.1Z" fill="#86d6f6" stroke="#0f3560" stroke-width=".6"/><g transform="translate(15.6,51.2) skewY(-13)"><text x="0" y="0" style="font:bold 14.5px 'Liberation Sans',sans-serif" fill="#7e7e7e" stroke="#7e7e7e" stroke-width=".45" textLength="27.5" lengthAdjust="spacingAndGlyphs">USD</text></g></svg><span style="top:846.74px;font-size:12.3px;line-height:16px;color:#a2a2a2;white-space:pre;left:433px;transform:translateX(-50%);">1000011_1</span><svg style="left:471px;top:786px;" width="48" height="58" viewBox="0 0 48 58"><defs><linearGradient id="pg9" x1="0" y1="0" x2="0.25" y2="1"><stop offset="0" stop-color="#dedede"/><stop offset=".55" stop-color="#c6c6c6"/><stop offset="1" stop-color="#a6a6a6"/></linearGradient></defs><path d="M0 52L9.2 47.5V56.6Z" fill="#121314"/><path d="M9.2 2.6L40.8 0.2L47.6 7V48L9.2 56.8Z" fill="url(#pg9)"/><path d="M40.6 0.3L47.6 7L41.3 6.4Z" fill="#fbfbfb"/><path d="M31.1 6.3L38.9 9.4V20L31.1 17Z" fill="#86d6f6" stroke="#14406a" stroke-width=".6"/><path d="M24.9 8.8L34.9 12.3V24.4L24.9 20.6Z" fill="#3db6ea" stroke="#14406a" stroke-width=".6"/><path d="M17.4 10L31.75 15V31.3L17.4 26.3Z" fill="#1b8fd8" stroke="#0f3560" stroke-width=".7"/><path d="M21.1 15.6L28 18.1V25.6L21.1 23.1Z" fill="#86d6f6" stroke="#0f3560" stroke-width=".6"/><g transform="translate(15.6,51.2) skewY(-13)"><text x="0" y="0" style="font:bold 14.5px 'Liberation Sans',sans-serif" fill="#7e7e7e" stroke="#7e7e7e" stroke-width=".45" textLength="27.5" lengthAdjust="spacingAndGlyphs">USD</text></g></svg><span style="top:846.74px;font-size:12.3px;line-height:16px;color:#a2a2a2;white-space:pre;left:499px;transform:translateX(-50%);">1000011_1</span><div style="left:362px;top:838px;width:179px;height:20px;background:#3c3c3c;border-radius:3px;"></div><div style="left:365px;top:841px;width:150.3px;height:14px;background:#222426;border-radius:3px;"></div><div style="left:414px;top:843px;width:8px;height:12px;background:#9c9c9c;border-radius:3px;"></div><div style="left:520px;top:842px;width:6.5px;height:5.5px;background:#8c8c8c;"></div><div style="left:527.8px;top:842px;width:6.5px;height:5.5px;background:#8c8c8c;"></div><div style="left:520px;top:848.5px;width:6.5px;height:5.5px;background:#8c8c8c;"></div><div style="left:527.8px;top:848.5px;width:6.5px;height:5.5px;background:#8c8c8c;"></div></div><span style="top:760.20px;font-size:12.7px;line-height:16px;color:#cccccc;white-space:pre;letter-spacing:-0.153px;left:698.4px;">Please Select a Isaac Asset!</span><div style="left:2px;top:866px;width:1440px;height:4px;background:#231f1d;"></div><div style="left:2px;top:870px;width:1440px;height:30px;background:#454545;"></div><div style="left:63px;top:23px;width:163.5px;height:406.5px;background:#373a3d;border-radius:2px 2px 5px 5px;"></div><div style="left:63px;top:23px;width:163.5px;height:22.5px;background:#1f1f1f;border-radius:0 0 4px 4px;"></div><div style="left:88px;top:33.5px;width:111px;height:1px;background:#9a9a9a;"></div><span style="top:51.70px;font-size:12.7px;line-height:16px;color:#e4e4e4;white-space:pre;letter-spacing:0.042px;left:106.3px;">Mesh</span><svg style="left:215.7px;top:55.7px;" width="5" height="7" viewBox="0 0 5 7"><path d="M0 0L3.9 3.3L0 6.6Z" fill="#eaeaea"/></svg><span style="top:75.70px;font-size:12.7px;line-height:16px;color:#e4e4e4;white-space:pre;letter-spacing:-0.258px;left:106.3px;">Shape</span><svg style="left:215.7px;top:79.7px;" width="5" height="7" viewBox="0 0 5 7"><path d="M0 0L3.9 3.3L0 6.6Z" fill="#eaeaea"/></svg><span style="top:99.70px;font-size:12.7px;line-height:16px;color:#e4e4e4;white-space:pre;letter-spacing:0.190px;left:106.3px;">Lights</span><svg style="left:215.7px;top:103.7px;" width="5" height="7" viewBox="0 0 5 7"><path d="M0 0L3.9 3.3L0 6.6Z" fill="#eaeaea"/></svg><span style="top:123.70px;font-size:12.7px;line-height:16px;color:#e4e4e4;white-space:pre;letter-spacing:0.109px;left:106.3px;">Audio</span><svg style="left:215.7px;top:127.7px;" width="5" height="7" viewBox="0 0 5 7"><path d="M0 0L3.9 3.3L0 6.6Z" fill="#eaeaea"/></svg><span style="top:147.70px;font-size:12.7px;line-height:16px;color:#e4e4e4;white-space:pre;letter-spacing:-0.188px;left:106.3px;">Camera</span><span style="top:171.70px;font-size:12.7px;line-height:16px;color:#e4e4e4;white-space:pre;transform:scaleX(0.9282);transform-origin:0 50%;left:106.3px;">Scope</span><span style="top:195.70px;font-size:12.7px;line-height:16px;color:#e4e4e4;white-space:pre;letter-spacing:0.192px;left:106.3px;">Materials</span><svg style="left:215.7px;top:199.7px;" width="5" height="7" viewBox="0 0 5 7"><path d="M0 0L3.9 3.3L0 6.6Z" fill="#eaeaea"/></svg><span style="top:219.70px;font-size:12.7px;line-height:16px;color:#e4e4e4;white-space:pre;letter-spacing:-0.029px;left:106.3px;">Xform</span><span style="top:243.70px;font-size:12.7px;line-height:16px;color:#e4e4e4;white-space:pre;letter-spacing:-0.068px;left:106.3px;">Graphs</span><svg style="left:215.7px;top:247.7px;" width="5" height="7" viewBox="0 0 5 7"><path d="M0 0L3.9 3.3L0 6.6Z" fill="#eaeaea"/></svg><span style="top:267.70px;font-size:12.7px;line-height:16px;color:#e4e4e4;white-space:pre;letter-spacing:-0.360px;left:106.3px;">Physics</span><svg style="left:215.7px;top:271.7px;" width="5" height="7" viewBox="0 0 5 7"><path d="M0 0L3.9 3.3L0 6.6Z" fill="#eaeaea"/></svg><span style="top:288.60px;font-size:12.7px;line-height:16px;color:#7c7c7c;white-space:pre;letter-spacing:-0.130px;left:72.2px;">Assets</span><div style="left:130px;top:296px;width:87px;height:1px;background:#8a8a8a;"></div><span style="top:309.70px;font-size:12.7px;line-height:16px;color:#e4e4e4;white-space:pre;letter-spacing:-0.201px;left:106.3px;">Robots</span><svg style="left:215.7px;top:313.7px;" width="5" height="7" viewBox="0 0 5 7"><path d="M0 0L3.9 3.3L0 6.6Z" fill="#eaeaea"/></svg><span style="top:333.70px;font-size:12.7px;line-height:16px;color:#e4e4e4;white-space:pre;letter-spacing:0.202px;left:106.3px;">Environments</span><svg style="left:215.7px;top:337.7px;" width="5" height="7" viewBox="0 0 5 7"><path d="M0 0L3.9 3.3L0 6.6Z" fill="#eaeaea"/></svg><span style="top:357.70px;font-size:12.7px;line-height:16px;color:#e4e4e4;white-space:pre;letter-spacing:-0.221px;left:106.3px;">Sensors</span><svg style="left:215.7px;top:361.7px;" width="5" height="7" viewBox="0 0 5 7"><path d="M0 0L3.9 3.3L0 6.6Z" fill="#eaeaea"/></svg><span style="top:381.70px;font-size:12.7px;line-height:16px;color:#e4e4e4;white-space:pre;transform:scaleX(0.9369);transform-origin:0 50%;left:106.3px;">ROS 2 Assets</span><svg style="left:215.7px;top:385.7px;" width="5" height="7" viewBox="0 0 5 7"><path d="M0 0L3.9 3.3L0 6.6Z" fill="#eaeaea"/></svg><span style="top:405.70px;font-size:12.7px;line-height:16px;color:#e4e4e4;white-space:pre;letter-spacing:-0.048px;left:106.3px;">April Tags</span><svg style="left:70px;top:52px;" width="14" height="15" viewBox="0 0 14 15"><path d="M7 0.5L13.5 3.7L7 7L0.5 3.7Z" fill="#5e6e72"/><path d="M0.5 3.7L7 7V14.5L0.5 11.2Z" fill="#3c4a4e"/><path d="M13.5 3.7V11.2L7 14.5V7Z" fill="#4c5b5f"/></svg><svg style="left:70px;top:76px;" width="14" height="15" viewBox="0 0 14 15"><path d="M7 0.5L13.5 3.7L7 7L0.5 3.7Z" fill="#5e6e72"/><path d="M0.5 3.7L7 7V14.5L0.5 11.2Z" fill="#3c4a4e"/><path d="M13.5 3.7V11.2L7 14.5V7Z" fill="#4c5b5f"/></svg><svg style="left:69px;top:100px;" width="16" height="16" viewBox="0 0 16 16"><rect x="4.2" y="4.2" width="7.6" height="7.6" rx="1" fill="#c9be6a"/><path d="M1 1L4 4M15 1L12 4M1 15L4 12M15 15L12 12" stroke="#c9be6a" stroke-width="1"/></svg><svg style="left:69px;top:124px;" width="16" height="15" viewBox="0 0 16 15"><path d="M1 5H3.5L7.5 1.5V13.5L3.5 10H1Z" fill="#5d7074"/><path d="M9.3 5A3.5 3.5 0 0 1 9.3 10M10.8 3A6 6 0 0 1 10.8 12M12.4 1.2A8.4 8.4 0 0 1 12.4 13.8" fill="none" stroke="#5d7074" stroke-width="1"/></svg><svg style="left:69px;top:148px;" width="16" height="15" viewBox="0 0 16 15"><circle cx="4" cy="4" r="2" fill="#5d7074"/><circle cx="8.8" cy="3.4" r="2.7" fill="#5d7074"/><rect x="2" y="6.5" width="9.5" height="7" rx=".8" fill="#5d7074"/><path d="M11.5 9.3L14.8 7V13.2L11.5 11Z" fill="#5d7074"/></svg><svg style="left:69px;top:172px;" width="16" height="14" viewBox="0 0 16 14"><path d="M1 2.2Q1 1 2.2 1H6L7.5 2.8H13.8Q15 2.8 15 4V11.8Q15 13 13.8 13H2.2Q1 13 1 11.8Z" fill="#5d7074"/></svg><svg style="left:70px;top:197px;" width="13" height="13" viewBox="0 0 13 13"><defs><radialGradient id="ms" cx=".42" cy=".36" r=".62"><stop offset="0" stop-color="#efeaf2"/><stop offset=".45" stop-color="#a794b4"/><stop offset="1" stop-color="#4a2a63"/></radialGradient></defs><circle cx="6.7" cy="6.2" r="5.4" fill="url(#ms)"/></svg><svg style="left:70px;top:221px;" width="14" height="14" viewBox="0 0 14 14"><path d="M7 7.5V1" stroke="#5fae6a" stroke-width="1.6" stroke-linecap="round"/><path d="M7 7.5L1.3 11.3" stroke="#2fa4d6" stroke-width="1.8" stroke-linecap="round"/><path d="M7 7.5L12.7 11.3" stroke="#c0504f" stroke-width="1.8" stroke-linecap="round"/></svg><svg style="left:69px;top:244px;" width="16" height="15" viewBox="0 0 16 15"><path d="M3.4 1H12Q12.8 1 12.8 1.8V5A2.3 2.3 0 0 1 12.8 9.4V12.2Q12.8 13 12 13H1.8Q1 13 1 12.2V3.4Z" fill="#5d7074"/><path d="M2.9 4.4H11L9.6 7.3L11 10.3H2.9L4.3 7.3Z" fill="#2d393d"/><circle cx="13" cy="7.2" r="2.1" fill="#5d7074"/><circle cx="13" cy="7.2" r="1.05" fill="#2d393d"/></svg><svg style="left:69px;top:267px;" width="16" height="16" viewBox="0 0 16 16"><circle cx="8" cy="2.2" r="1.8" fill="#5d7074"/><path d="M8 4.5L12 6.5L8 8.5L4 6.5Z" fill="#74868a"/><path d="M4 6.5L8 8.5V13L4 11Z" fill="#4a5a5e"/><path d="M12 6.5V11L8 13V8.5Z" fill="#5d7074"/><path d="M2 8V13M0.8 11.6L2 13.4L3.2 11.6M14 8V13M12.8 11.6L14 13.4L15.2 11.6" stroke="#5d7074" stroke-width="1" fill="none"/></svg><svg style="left:70px;top:310px;" width="14" height="14" viewBox="0 0 14 14"><path d="M1.5 1.5L4 2.5M4 2.5L12 2" stroke="#bcbcbc" stroke-width="1.6"/><path d="M11 2.5L7 9" stroke="#b4b4b4" stroke-width="2.4"/><path d="M3.5 13L5 9.5H9.5L11 13Z" fill="#bcbcbc"/><circle cx="11" cy="2.3" r="1.6" fill="#bcbcbc"/></svg><svg style="left:70px;top:334px;" width="14" height="14" viewBox="0 0 14 14"><circle cx="7" cy="7" r="5.8" fill="none" stroke="#7a7a7a" stroke-width="1"/><ellipse cx="7" cy="7" rx="2.6" ry="5.8" fill="none" stroke="#7a7a7a" stroke-width="1"/><path d="M1.2 7H12.8M2 4H12M2 10H12" stroke="#7a7a7a" stroke-width=".9"/></svg><svg style="left:70px;top:358px;" width="14" height="14" viewBox="0 0 14 14"><rect x="0.8" y="1.2" width="6.5" height="11.6" rx="1.5" fill="#777777"/><circle cx="5.8" cy="7" r="2.3" fill="#c2c2c2"/><path d="M8.6 3.6A4.5 4.5 0 0 1 8.6 10.4M10.4 1.8A7 7 0 0 1 10.4 12.2" fill="none" stroke="#2f9c8c" stroke-width="1.2"/></svg><svg style="left:71px;top:382px;" width="12" height="15" viewBox="0 0 12 15"><path d="M3 0.5V4M9 0.5V4" stroke="#e6e6e6" stroke-width="1.6"/><path d="M1 4H11V7.5Q11 11 7.2 11.4V14.5H4.8V11.4Q1 11 1 7.5Z" fill="#e6e6e6"/></svg><svg style="left:70px;top:406px;" width="14" height="14" viewBox="0 0 14 14"><rect x="0.6" y="0.6" width="12.8" height="12.8" fill="#555b66"/><rect x="1.6" y="1.6" width="10.8" height="10.8" fill="#0c1230"/><path d="M3.8 3.2H5.4V8.2H3.8ZM5.4 5.4H7V10.6H5.4ZM7 3H8.6V6H7ZM8.6 5H10.4V7.8H8.6ZM7.6 8.4H9.2V10.8H7.6ZM3 9.4H4.4V10.8H3ZM10 9.4H11.2V10.8H10Z" fill="#e6eaf2"/></svg><div style="left:227px;top:48px;width:117.5px;height:205.5px;background:#373a3d;border-radius:2px 2px 5px 5px;"></div><div style="left:227px;top:48px;width:117.5px;height:23.7px;background:#1f1f1f;border-radius:0 0 4px 4px;"></div><div style="left:226.3px;top:70px;width:1px;height:180px;background:#494949;"></div><div style="left:252px;top:60px;width:65px;height:1px;background:#8a8a8a;"></div><div style="left:236px;top:81px;width:99px;height:1px;background:#8f9294;"></div><div style="left:227px;top:138px;width:117.5px;height:22px;background:#323232;"></div><span style="top:93.70px;font-size:12.7px;line-height:16px;color:#e4e4e4;white-space:pre;letter-spacing:-0.109px;left:247.8px;">Capsule</span><span style="top:117.70px;font-size:12.7px;line-height:16px;color:#e4e4e4;white-space:pre;letter-spacing:-0.161px;left:247.8px;">Cone</span><span style="top:141.70px;font-size:12.7px;line-height:16px;color:#e4e4e4;white-space:pre;letter-spacing:-0.161px;left:247.8px;">Cube</span><span style="top:165.70px;font-size:12.7px;line-height:16px;color:#e4e4e4;white-space:pre;letter-spacing:0.082px;left:247.8px;">Cylinder</span><span style="top:189.70px;font-size:12.7px;line-height:16px;color:#e4e4e4;white-space:pre;letter-spacing:-0.020px;left:247.8px;">Sphere</span><div style="left:236px;top:217px;width:99px;height:1px;background:#8f9294;"></div><svg style="left:239px;top:232px;" width="12" height="11" viewBox="0 0 12 11"><path d="M1.5 5.5L4.6 8.6L10.5 2.2" fill="none" stroke="#2f9de0" stroke-width="1.9"/></svg><span style="top:229.70px;font-size:12.7px;line-height:16px;color:#e4e4e4;white-space:pre;letter-spacing:0.191px;left:256.1px;">High Quality</span></body></html>
